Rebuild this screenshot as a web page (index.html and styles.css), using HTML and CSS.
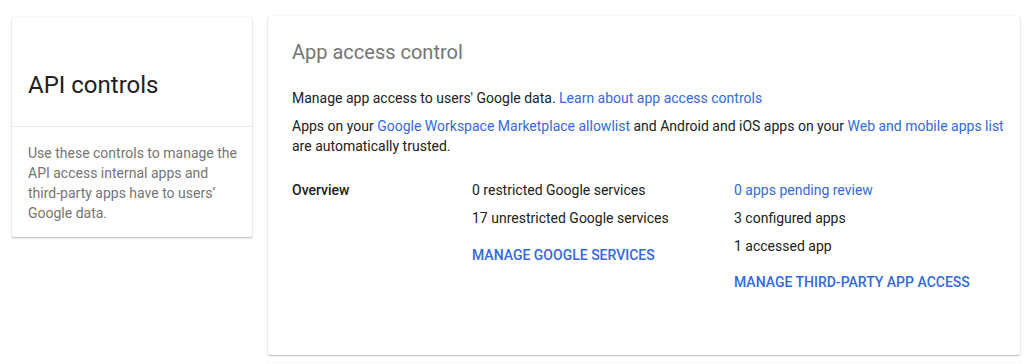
FILE: index.html
```html
<!DOCTYPE html>
<html>
<head>
<meta charset="utf-8">
<link rel="stylesheet" href="styles.css">
</head>
<body>
<div class="page">
  <aside class="card side">
    <div class="side-head"><h1>API controls</h1></div>
    <div class="side-body">Use these controls to manage the API access internal apps and third-party apps have to users’ Google data.</div>
  </aside>
  <main class="main-col">
    <section class="card main">
      <h2>App access control</h2>
      <p class="p1">Manage app access to users' Google data. <a href="#">Learn about app access controls</a></p>
      <p class="p2">Apps on your <a href="#">Google Workspace Marketplace allowlist</a> and Android and iOS apps on your <a href="#">Web and mobile apps list</a> are automatically trusted.</p>
      <div class="overview">
        <div class="label">Overview</div>
        <div class="col">
          <div class="row">0 restricted Google services</div>
          <div class="row">17 unrestricted Google services</div>
          <a class="btn" href="#">MANAGE GOOGLE SERVICES</a>
        </div>
        <div class="col col-apps">
          <a class="row" href="#">0 apps pending review</a>
          <div class="row">3 configured apps</div>
          <div class="row">1 accessed app</div>
          <a class="btn" href="#">MANAGE THIRD-PARTY APP ACCESS</a>
        </div>
      </div>
    </section>
    <section class="card next"></section>
  </main>
</div>
</body>
</html>
```

FILE: styles.css
```css
html, body {
  margin: 0;
  padding: 0;
  background: #fff;
}
body {
  font-family: Roboto, "Liberation Sans", sans-serif;
  font-size: 14px;
  line-height: 20px;
  color: #212121;
  height: 364px;
  overflow: hidden;
}
a {
  color: #3569dc;
  text-decoration: none;
}
.page {
  display: flex;
  align-items: flex-start;
  gap: 16px;
  padding: 16px 11px 0 12px;
  height: 364px;
  box-sizing: border-box;
  overflow: hidden;
}
.card {
  background: #fff;
  border-radius: 2px;
  box-shadow: 0 1px 2px rgba(0, 0, 0, 0.28), 0 0 1px rgba(0, 0, 0, 0.12);
}
.side {
  width: 240px;
  flex: none;
  margin-top: 1px;
}
.side-head {
  padding: 52px 16px 25px;
  border-bottom: 1px solid #e8e8e8;
}
.side-head h1 {
  margin: 0;
  font-size: 24px;
  line-height: 32px;
  font-weight: 400;
  color: #212121;
}
.side-body {
  padding: 16px 10px 14px 16px;
  color: #757575;
}
.main-col {
  flex: 1;
  display: flex;
  flex-direction: column;
  gap: 8px;
}
.main {
  height: 339px;
  box-sizing: border-box;
  padding: 22px 12px 0 24px;
}
.main h2 {
  margin: 0;
  font-size: 20px;
  line-height: 28px;
  font-weight: 400;
  color: #757575;
}
.p1 {
  margin: 22px 0 0;
}
.p2 {
  margin: 8px 0 0;
}
.overview {
  display: grid;
  grid-template-columns: 180px 262px 1fr;
  margin-top: 24px;
}
.label {
  font-weight: 500;
}
.col {
  display: flex;
  flex-direction: column;
  align-items: flex-start;
}
.row {
  margin-bottom: 8px;
}
.btn {
  margin-top: 9px;
  font-weight: 500;
  color: #3569dc;
}
.col-apps .btn {
  margin-top: 8px;
}
.next {
  height: 1px;
}
```
